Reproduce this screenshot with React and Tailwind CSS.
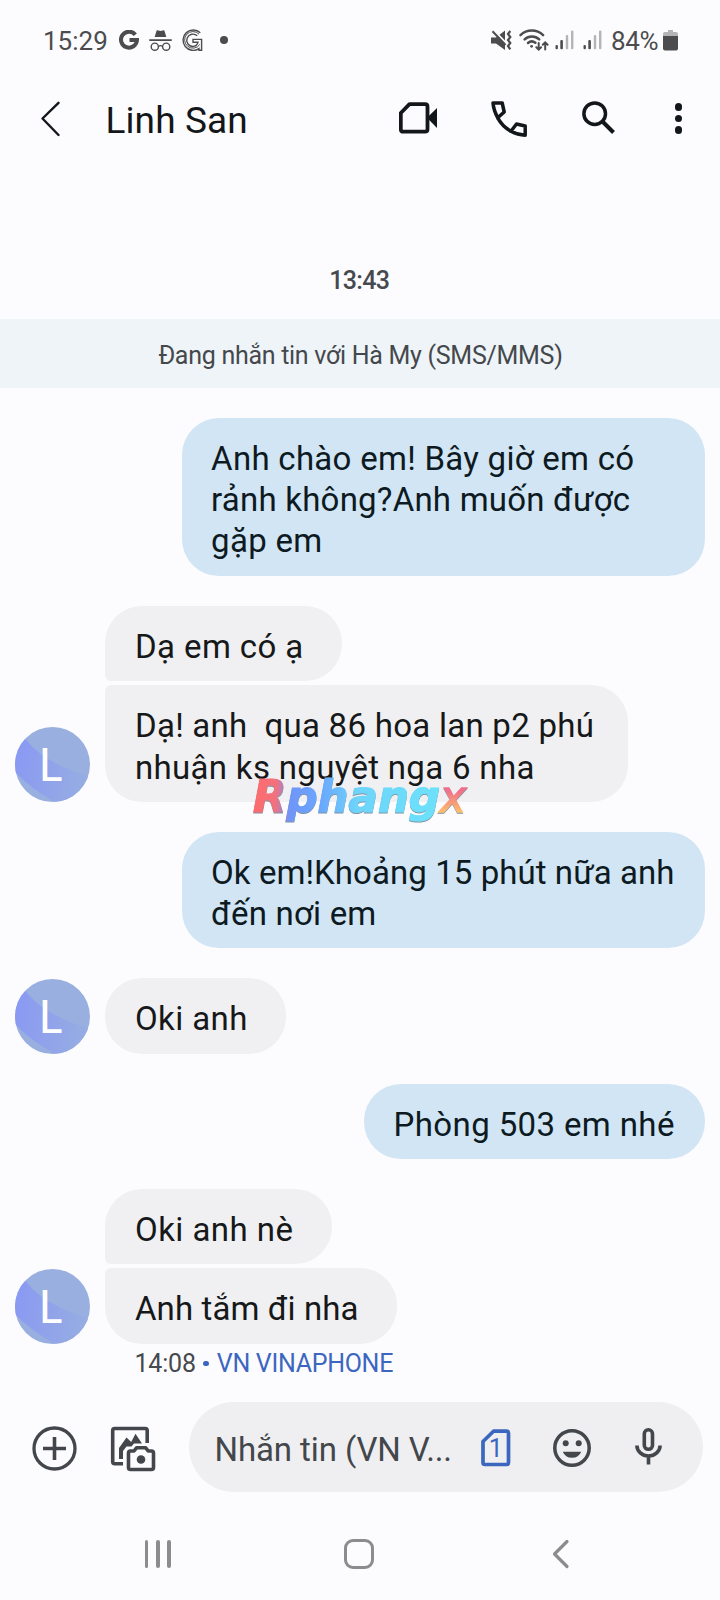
const thread = [
  {
    from: "me",
    bubbles: [
      {
        box: "w-[523.5px] rounded-[37px]",
        lines: [
          ["Anh chào em! Bây giờ em có", "tracking-[0.28px]"],
          ["rảnh không?Anh muốn được", "tracking-[0.22px]"],
          ["gặp em", "tracking-[0.3px]"],
        ],
      },
    ],
  },
  {
    from: "them",
    bubbles: [
      {
        box: "w-[236.5px] rounded-[37px] rounded-bl-[6px]",
        lines: [["Dạ em có ạ", "tracking-[0.4px]"]],
      },
      {
        box: "w-[523px] rounded-[37px] rounded-tl-[6px]",
        lines: [
          ["Dạ! anh  qua 86 hoa lan p2 phú", "tracking-[0.27px]"],
          ["nhuận ks nguyệt nga 6 nha", "tracking-[0.32px]"],
        ],
      },
    ],
  },
  {
    from: "me",
    bubbles: [
      {
        box: "w-[523.5px] rounded-[37px]",
        lines: [
          ["Ok em!Khoảng 15 phút nữa anh", "tracking-[0.07px]"],
          ["đến nơi em", "tracking-[0.2px]"],
        ],
      },
    ],
  },
  {
    from: "them",
    bubbles: [
      { box: "w-[181px] rounded-[37px]", lines: [["Oki anh", "tracking-[0.4px]"]] },
    ],
  },
  {
    from: "me",
    bubbles: [
      { box: "w-[341px] rounded-[37px]", lines: [["Phòng 503 em nhé", "tracking-[0.38px]"]] },
    ],
  },
  {
    from: "them",
    bubbles: [
      {
        box: "w-[227px] rounded-[37px] rounded-bl-[6px]",
        lines: [["Oki anh nè", "tracking-[0.45px]"]],
      },
      {
        box: "w-[292px] rounded-[37px] rounded-tl-[6px]",
        lines: [["Anh tắm đi nha", "tracking-[0.1px]"]],
      },
    ],
  },
];

function SignalIcon({ className }) {
  return (
    <svg width="19" height="20" viewBox="0 0 19 20" className={className}>
      <rect x="0.5" y="15" width="2.4" height="4.3" rx="1" fill="#4c4c4e" />
      <rect x="5.3" y="10" width="2.6" height="9.3" rx="1" fill="#4c4c4e" />
      <rect x="10.8" y="5" width="2.4" height="14.3" rx="1" fill="#b4b4b6" />
      <rect x="16" y="0.5" width="2.4" height="18.8" rx="1" fill="#b4b4b6" />
    </svg>
  );
}

function StatusBar() {
  return (
    <div className="flex h-[80px] items-center pl-[43px] pr-[42px] text-[#4c4c4e]">
      <span className="w-[76px] pt-px text-[26px] leading-none">15:29</span>
      <svg width="20" height="20" viewBox="0 0 20 20" fill="none" stroke="currentColor" strokeWidth="4">
        <path d="M16.3 4.7A8 8 0 1 0 18 10H10.5" />
      </svg>
      <svg width="23" height="21" viewBox="0 0 23 21" fill="none" className="ml-[10px]">
        <path d="M7.3 1.4c.3-1 1-1.3 2-1l2.2.6 2.2-.6c1-.3 1.7 0 2 1L17.3 7H5.7z" fill="currentColor" />
        <rect x="0" y="9.2" width="23" height="1.7" rx=".8" fill="currentColor" />
        <g stroke="currentColor" strokeWidth="1.4">
          <circle cx="5.8" cy="16.7" r="3.6" />
          <circle cx="17.2" cy="16.7" r="3.6" />
          <path d="M9.7 16.2q1.8-1.2 3.6 0" />
        </g>
      </svg>
      <svg width="21" height="23" viewBox="0 0 21 23" fill="none" stroke="currentColor" strokeWidth="1.4" className="ml-[10px]">
        <path d="M18.3 3.8A10.2 10.2 0 1 0 17 19.6V21.3H19.6V10.4H11V13.2H16Q15 17.5 10.8 17.5A6.2 6.2 0 1 1 15.2 6.8" />
        <path d="M17 5.2A8.3 8.3 0 1 0 17.8 15.5" strokeWidth="1" />
      </svg>
      <span className="ml-[17px] size-2 rounded-full bg-current" />

      <div className="ml-auto flex items-center">
        <svg width="21" height="21" viewBox="0 0 21 21" fill="none">
          <path d="M0 7.5h5l9-7V20l-9-6.5H0z" fill="currentColor" />
          <path d="M2-.5 15.5 13.5" stroke="#fcfcff" strokeWidth="2" />
          <path d="M1.5 1.2 14.5 15" stroke="currentColor" strokeWidth="2" />
          <path d="M19.3 1 17 4l2.3 3-2.3 3 2.3 3-2.3 3 2.3 3.3" stroke="currentColor" strokeWidth="2.2" />
        </svg>
        <svg width="31" height="24" viewBox="0 0 31 24" fill="none" stroke="currentColor" strokeWidth="2.5" strokeLinecap="round" className="ml-[7px]">
          <path d="M1.5 7.1a16.5 16.5 0 0 1 22.6 0" />
          <path d="M5.6 11.3a10.6 10.6 0 0 1 14.6 0" />
          <path d="M9 15a5.8 5.8 0 0 1 7.4-.2" />
          <circle cx="12.6" cy="18.3" r="1.4" fill="currentColor" stroke="none" />
          <path d="M19.7 15v6.2M17.3 19.2l2.4 2.4 2.4-2.4M26.2 21.4V15M23.8 16.8l2.4-2.4 2.4 2.4" strokeWidth="2" />
        </svg>
        <SignalIcon className="ml-[5px]" />
        <SignalIcon className="ml-[9px]" />
        <span className="ml-[9px] w-[51px] pt-px text-[26px] leading-none tracking-[-0.3px]">84%</span>
        <svg width="15" height="21" viewBox="0 0 15 21" className="ml-[1px]">
          <path d="M5 0h5v2h3a2 2 0 0 1 2 2v3H0V4a2 2 0 0 1 2-2h3z" fill="#b4b4b6" />
          <path d="M0 6h15v12.5a2 2 0 0 1-2 2H2a2 2 0 0 1-2-2z" fill="currentColor" />
        </svg>
      </div>
    </div>
  );
}

function ChatHeader() {
  return (
    <div className="flex h-[78px] items-center pl-[40px] text-[#14171a]">
      <svg width="20" height="36" viewBox="0 0 20 36" fill="none" stroke="currentColor" strokeWidth="2.4" strokeLinecap="round" strokeLinejoin="round" className="mt-[-1px]">
        <path d="M18.5 1.8 2.5 17.5 18.5 34" />
      </svg>
      <h1 className="ml-[45.5px] mt-[3px] w-[293.5px] text-[37px] leading-none tracking-[0.1px]">Linh San</h1>
      <svg width="39" height="32" viewBox="0 0 39 32" fill="none" className="mt-[-3px]">
        <path d="M10.5 2.2H26q2.5 0 2.5 2.5v22.5q0 2.5-2.5 2.5H4.2q-2.4 0-2.4-2.5V11z" stroke="currentColor" strokeWidth="3.8" strokeLinejoin="round" />
        <path d="M28 15.8 38 6v20z" fill="currentColor" />
      </svg>
      <svg width="36" height="36" viewBox="0 0 36 36" fill="none" stroke="currentColor" strokeWidth="3.5" strokeLinejoin="round" className="ml-[53px] mt-[-1px]">
        <path d="M2 2h9.2l2 9-6.5 5.8C4.2 12 2.5 8 2 2z" />
        <path d="M6.7 16.8a34 34 0 0 0 13.2 13.4" />
        <path d="M19.9 30.2 25.5 23l8.7 2v9.2c-5.3-.3-9.6-1.5-14.3-4z" />
      </svg>
      <svg width="34" height="34" viewBox="0 0 34 34" fill="none" stroke="currentColor" className="ml-[55px] mt-[-2px]">
        <circle cx="12.7" cy="12.7" r="10.8" strokeWidth="3.5" />
        <path d="M20.5 20.5 31.5 31.5" strokeWidth="4" />
      </svg>
      <div className="mt-[-1px] ml-[58.5px] flex flex-col gap-[3.8px]">
        <span className="size-[7.5px] rounded-full bg-current" />
        <span className="size-[7.5px] rounded-full bg-current" />
        <span className="size-[7.5px] rounded-full bg-current" />
      </div>
    </div>
  );
}

function Avatar() {
  return (
    <svg width="75" height="75" viewBox="0 0 75 75" className="mr-[15px] shrink-0">
      <defs>
        <clipPath id="avatar">
          <circle cx="37.5" cy="37.5" r="37.5" />
        </clipPath>
        <linearGradient id="shade" x1="0" y1=".4" x2="1" y2=".6">
          <stop offset="0" stopColor="#8a99f3" />
          <stop offset=".55" stopColor="#91a4e9" />
          <stop offset="1" stopColor="#96aee2" />
        </linearGradient>
      </defs>
      <g clipPath="url(#avatar)">
        <rect width="75" height="75" fill="#98afe0" />
        <path d="M0 0 13 15Q30 36 75 50V75H40Q16 62 0 45z" fill="url(#shade)" />
      </g>
      <text x="23.5" y="54" fontSize="46" fontFamily="Lato, sans-serif" fill="#fff">L</text>
    </svg>
  );
}

function MessageGroup({ from, bubbles }) {
  const mine = from === "me";
  return (
    <div className={mine ? "flex justify-end pr-[15px]" : "flex items-end pl-[15.4px]"}>
      {!mine && <Avatar />}
      <div className="flex flex-col gap-[4.2px]">
        {bubbles.map(({ box, lines }) => (
          <div
            key={lines[0][0]}
            className={`${box} ${mine ? "bg-[#d2e5f4] text-[#0d1a22]" : "bg-[#f0f0f2] text-[#16181a]"} pt-[20px] pb-[14px] pl-[29.6px] text-[33px] leading-[41.33px] whitespace-pre`}
          >
            {lines.map(([text, tracking]) => (
              <p key={text} className={tracking}>{text}</p>
            ))}
          </div>
        ))}
      </div>
    </div>
  );
}

function Watermark() {
  return (
    <svg width="230" height="64" viewBox="0 0 230 64" className="absolute top-[767px] left-[248px] drop-shadow-[0_1.5px_0_#7f93a5]">
      <defs>
        <linearGradient id="mark" gradientUnits="userSpaceOnUse" x1="5" y1="20" x2="196" y2="30">
          <stop offset="0" stopColor="#ff6b6b" />
          <stop offset=".12" stopColor="#f2717c" />
          <stop offset=".2" stopColor="#6f96fa" />
          <stop offset=".35" stopColor="#6aa6ff" />
          <stop offset=".55" stopColor="#6dd5fa" />
          <stop offset="1" stopColor="#6ce2fb" />
        </linearGradient>
        <linearGradient id="markX" x1="0" y1="0" x2="0" y2="1">
          <stop offset=".4" stopColor="#f0708a" />
          <stop offset=".8" stopColor="#ffc06a" />
        </linearGradient>
      </defs>
      <g fontFamily="DejaVu Sans, sans-serif" fontStyle="italic" fontSize="45">
        <text x="5" y="45" textLength="187" lengthAdjust="spacingAndGlyphs" fontWeight="bold" fill="url(#mark)" stroke="url(#mark)" strokeWidth="1.2">Rphang</text>
        <text x="192" y="45" textLength="26" lengthAdjust="spacingAndGlyphs" fill="url(#markX)" stroke="url(#markX)" strokeWidth="1.5">x</text>
      </g>
    </svg>
  );
}

function Composer() {
  return (
    <div className="flex h-[90px] items-center pl-[32px] text-[#43474c]">
      <svg width="45" height="45" viewBox="0 0 45 45" fill="none" stroke="currentColor" strokeWidth="3.6" className="mt-[3px]">
        <circle cx="22.5" cy="22.5" r="20.5" strokeWidth="3.3" />
        <path d="M22.5 11v23M11 22.5h23" />
      </svg>
      <svg width="46" height="46" viewBox="0 0 46 46" fill="none" className="ml-[33px] mt-[3px]">
        <path d="M37.2 17V4.5Q37.2 2.5 35.2 2.5H4.7Q2.7 2.5 2.7 4.5V35.5Q2.7 37.8 4.7 37.8H13" stroke="currentColor" strokeWidth="3.6" />
        <path d="M9 33V22l7.5-10.5 4.7 4.5L25.5 7.8 32 17.5H24l-2.5 3H16.500L13 25v8z" fill="currentColor" />
        <path d="M20.5 25H24l2.500-3.200h9.200l2.500 3.200H41.500q2 0 2 2V41.500q0 2-2 2H20.500q-2 0-2-2V27q0-2 2-2z" stroke="currentColor" strokeWidth="3.6" strokeLinejoin="round" />
        <circle cx="31" cy="33.5" r="4.3" fill="currentColor" />
      </svg>
      <div className="ml-[33px] flex h-[90px] w-[514px] items-center rounded-full bg-[#efeff1] pl-[25.5px]">
        <span className="mt-[5px] w-[266.5px] text-[33px] leading-none tracking-[-0.1px] whitespace-pre">Nhắn tin (VN V...</span>
        <svg width="30" height="38" viewBox="0 0 30 38" fill="none" stroke="#3c67bf" strokeLinejoin="round" className="mt-[2px]">
          <path d="M12.5 2.2H25.5q2 0 2 2V33.5q0 2-2 2H4q-2 0-2-2V12.5z" strokeWidth="3.7" />
          <text x="14.8" y="28" textAnchor="middle" fontSize="25" fontFamily="Roboto, sans-serif" fill="#3c67bf" stroke="none">1</text>
        </svg>
        <svg width="38" height="38" viewBox="0 0 38 38" fill="none" className="ml-[42px] mt-px">
          <circle cx="19" cy="19" r="17.2" stroke="currentColor" strokeWidth="3.5" />
          <circle cx="12.7" cy="14.3" r="3" fill="currentColor" />
          <circle cx="25.7" cy="14.3" r="3" fill="currentColor" />
          <path d="M9.8 22.8h18.4a9.8 9.2 0 0 1-18.4 0z" fill="currentColor" />
        </svg>
        <svg width="27" height="38" viewBox="0 0 27 38" fill="none" stroke="currentColor" strokeWidth="3.6" className="ml-[43.5px] mt-[-3px]">
          <rect x="9.3" y="2.8" width="8.2" height="19.5" rx="4" />
          <path d="M1.9 18.5a11.6 10.5 0 0 0 23.2 0M13.5 29.5v8" />
        </svg>
      </div>
    </div>
  );
}

function NavBar() {
  return (
    <div className="mt-[46px] flex h-[32px] items-center pl-[144.5px] text-[#8c8c8e]">
      <div className="flex gap-[7.5px]">
        <span className="h-[28px] w-[3.8px] rounded-full bg-current" />
        <span className="h-[28px] w-[3.8px] rounded-full bg-current" />
        <span className="h-[28px] w-[3.8px] rounded-full bg-current" />
      </div>
      <span className="ml-[173px] size-[30px] rounded-[9px] border-[3px] border-current" />
      <svg width="18" height="30" viewBox="0 0 18 30" fill="none" stroke="currentColor" strokeWidth="3.2" strokeLinecap="round" strokeLinejoin="round" className="ml-[178px]">
        <path d="M15 2.5 2.5 15 15 27.5" />
      </svg>
    </div>
  );
}

export default function App() {
  return (
    <div className="relative h-[1600px] w-[720px] overflow-hidden bg-[#fcfcff] font-['Roboto','Noto_Sans',sans-serif]">
      <StatusBar />
      <ChatHeader />

      <div className="mt-[108px] h-[53px] pt-[2px] pr-[1.5px] text-center text-[25px] leading-[26px] font-medium tracking-[-0.7px] text-[#46494d]">
        13:43
      </div>
      <div className="flex h-[68.5px] items-center justify-center bg-[#eff4f8] pt-[5px] pl-[1px] text-[25px] tracking-[-0.28px] text-[#44484c]">
        Đang nhắn tin với Hà My (SMS/MMS)
      </div>

      <div className="mt-[30.3px] flex flex-col gap-[29.9px]">
        {thread.map((group, index) => (
          <MessageGroup key={index} {...group} />
        ))}
      </div>

      <div className="mt-[3.7px] flex h-[32px] items-center pl-[134.5px] text-[25px] leading-none">
        <span className="tracking-[-0.2px] text-[#46494d]">14:08</span>
        <span className="ml-[7.5px] size-[5.5px] rounded-full bg-[#3c67bf]" />
        <span className="ml-[8px] tracking-[-0.3px] text-[#3c67bf]">VN VINAPHONE</span>
      </div>

      <div className="mt-[23px]">
        <Composer />
      </div>
      <NavBar />
      <Watermark />
    </div>
  );
}
